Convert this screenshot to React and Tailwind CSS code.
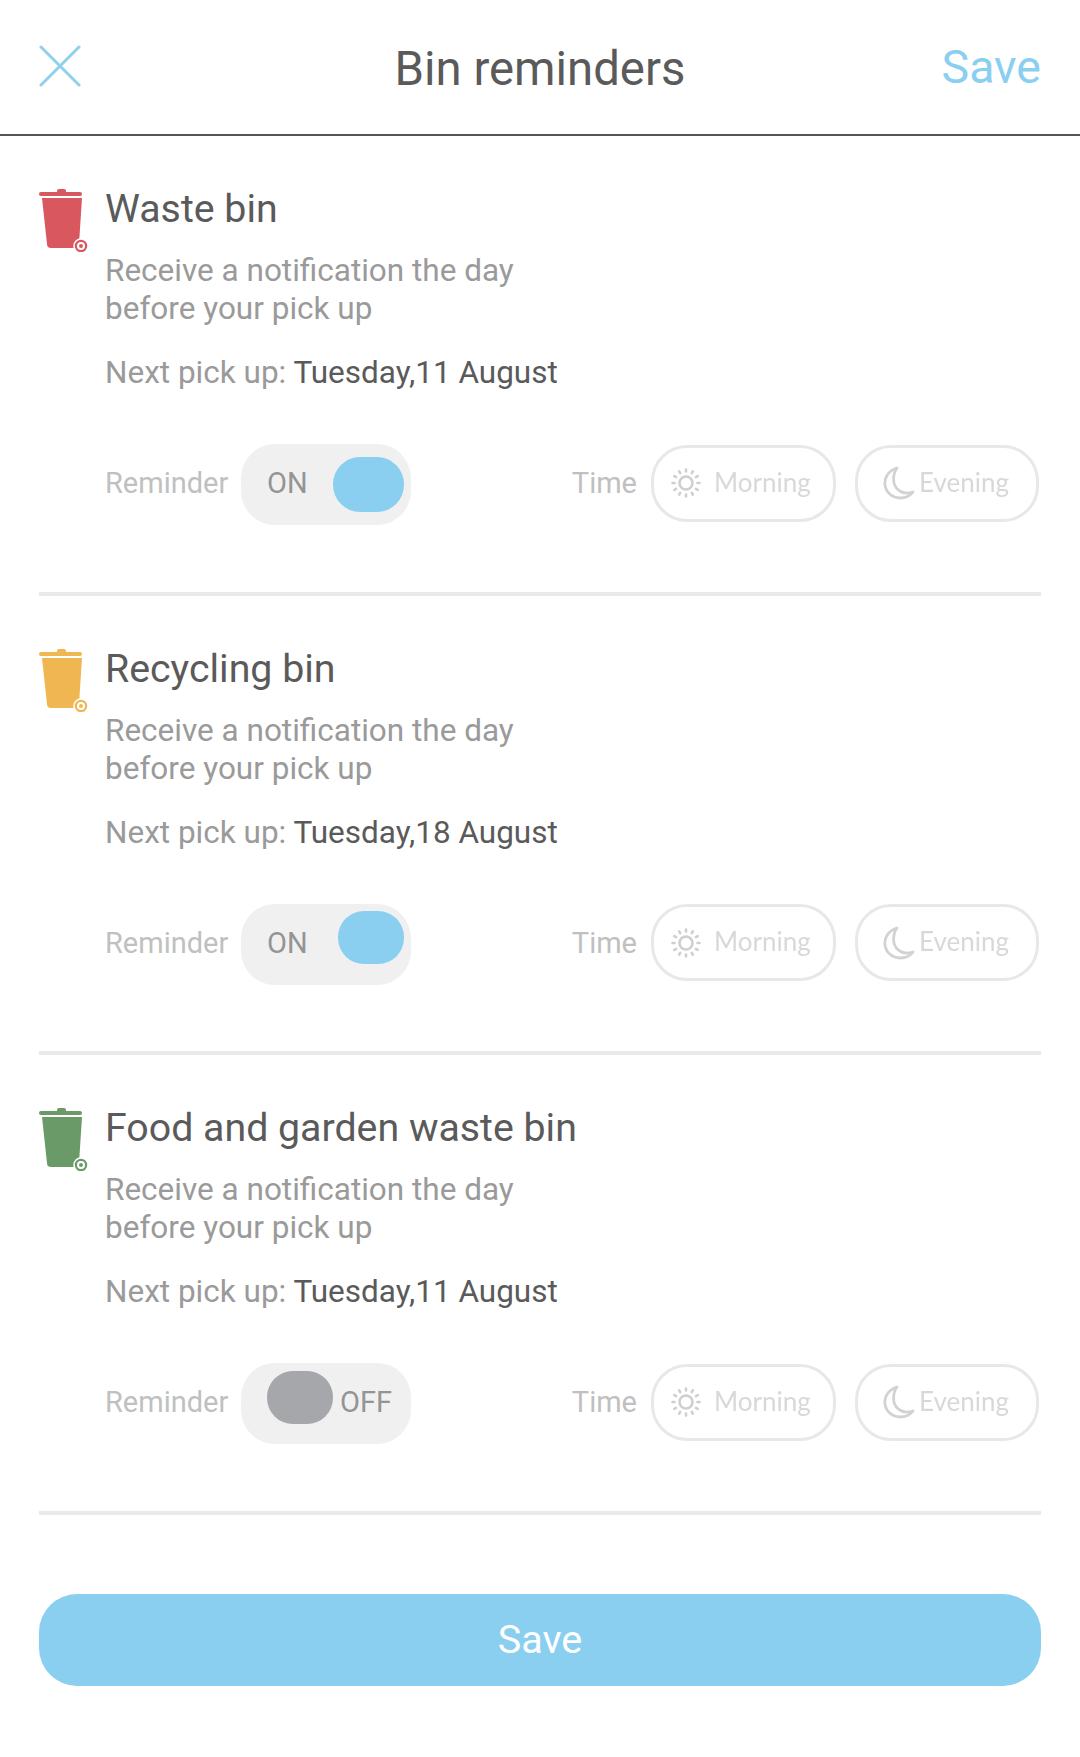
// Bin reminders settings screen
import React from 'react';

const bins = [
  { name: 'Waste bin', date: 'Tuesday,11 August', color: '#d9585f', state: 'on-large' },
  { name: 'Recycling bin', date: 'Tuesday,18 August', color: '#efb652', state: 'on' },
  { name: 'Food and garden waste bin', date: 'Tuesday,11 August', color: '#6a9a68', state: 'off' },
];

const BinIcon = ({ color }) => (
  <svg width="50" height="64" viewBox="0 0 50 64" className="mt-[6px] shrink-0">
    <rect x="18" y="1" width="9" height="5" rx="2" fill={color} />
    <rect x="0" y="4" width="43" height="4" rx="2" fill={color} />
    <path d="M3 10 H43 L40 56 Q40 60 36 60 H12 Q8 60 8 56 Z" fill={color} />
    <circle cx="42" cy="58" r="7" fill={color} stroke="#fff" strokeWidth="1.5" />
    <circle cx="42" cy="58" r="3" fill={color} stroke="#fff" strokeWidth="2" />
  </svg>
);

const SunIcon = () => (
  <svg width="32" height="32" viewBox="0 0 32 32" fill="none" stroke="#cfcfcf" strokeWidth="2.6" strokeLinecap="round" className="shrink-0">
    <circle cx="16" cy="16" r="6.5" />
    <path d="M16 2.5v2M16 27.5v2M2.5 16h2M27.5 16h2M9.2 4.3l1 1.8M21.8 25.9l1 1.8M4.3 9.2l1.8 1M25.9 21.8l1.8 1M4.3 22.8l1.8-1M25.9 10.2l1.8-1M9.2 27.7l1-1.8M21.8 6.1l1-1.8" />
  </svg>
);

const MoonIcon = () => (
  <svg width="32" height="34" viewBox="0 0 32 34" fill="none" stroke="#d2d2d2" strokeWidth="2.8" strokeLinejoin="round" className="shrink-0">
    <path d="M14 2 C5 5 1 12 2 19 C3 27 10 32 17 32 C23 32 28 29 30 26 C21 29 13 25 11 17 C10 11 11 6 14 2 Z" />
  </svg>
);

const Toggle = ({ state }) => {
  if (state === 'off') {
    return (
      <div className="mt-[3px] flex h-[81px] w-[170px] items-start rounded-[34px] bg-[#f0f0f1] pl-[26px] pt-2">
        <div className="h-[53px] w-[66px] rounded-[26px] bg-[#a6a7aa]" />
        <span className="ml-[7px] mt-[9px] text-[29px] leading-[44px] text-[#949494]">OFF</span>
      </div>
    );
  }
  return (
    <div className="mt-[3px] flex h-[81px] w-[170px] items-start justify-between rounded-[34px] bg-[#f0f0f1] pl-[26px] pr-[7px]">
      <span className="mt-[17px] text-[29px] leading-[44px] text-[#949494]">ON</span>
      {state === 'on-large' ? (
        <div className="mt-[13px] h-[55px] w-[71px] rounded-[27px] bg-[#8bcff0]" />
      ) : (
        <div className="mt-[7px] h-[53px] w-[66px] rounded-[26px] bg-[#8bcff0]" />
      )}
    </div>
  );
};

const TimePill = ({ icon, label, className }) => (
  <div className={`flex h-[77px] items-center rounded-[36px] border-[3px] border-[#e8e8e8] ${className}`}>
    {icon}
    <span className="pb-[3px] font-['Lato'] text-[26px] leading-none text-[#d8d8d8] blur-[0.4px]">{label}</span>
  </div>
);

const BinSection = ({ bin }) => (
  <section className="mx-[39px] h-[459.6px] border-b-[4px] border-[#e9e9e9] pt-[46px]">
    <div className="flex gap-4">
      <BinIcon color={bin.color} />
      <div className="flex-1">
        <h2 className="-mt-px text-[39.3px] leading-[56px] text-[#5a5a5a]">{bin.name}</h2>
        <p className="mt-[15px] text-[31.5px] leading-[38px] text-[#9a9a9a]">
          Receive a notification the day
          <br />
          before your pick up
        </p>
        <p className="mt-[26px] text-[31.5px] leading-[38px] text-[#9a9a9a]">
          Next pick up: <span className="text-[#5a5a5a]">{bin.date}</span>
        </p>
      </div>
    </div>
    <div className="mt-[49px] flex items-center pl-[66px]">
      <span className="w-[136px] pt-[2px] text-[29px] text-[#c0c0c0]">Reminder</span>
      <Toggle state={bin.state} />
      <span className="ml-auto mr-[14px] pt-[2px] text-[29px] text-[#c0c0c0]">Time</span>
      <TimePill icon={<SunIcon />} label="Morning" className="w-[185px] gap-[12px] pl-[16px]" />
      <TimePill icon={<MoonIcon />} label="Evening" className="ml-[19px] mr-[2px] w-[184px] gap-[4px] pl-[25px]" />
    </div>
  </section>
);

const App = () => (
  <div className="min-h-screen bg-white font-['Roboto',sans-serif]">
    <header className="grid h-[136px] grid-cols-[1fr_auto_1fr] items-center border-b-2 border-[#555555] px-[39px] pb-[2px]">
      <svg width="42" height="42" viewBox="0 0 42 42" fill="none" stroke="#8fd0ec" strokeWidth="3" strokeLinecap="round">
        <path d="M2 2 L40 40 M40 2 L2 40" />
      </svg>
      <h1 className="pt-[7px] text-[47.3px] leading-none text-[#5a5a5a]">Bin reminders</h1>
      <button className="justify-self-end pt-[2px] text-[46.5px] leading-none text-[#8bcff0]">Save</button>
    </header>
    {bins.map((bin) => (
      <BinSection key={bin.name} bin={bin} />
    ))}
    <div className="px-[39px] pt-[79px]">
      <button className="h-[92px] w-full rounded-[38px] bg-[#8bcff0] text-[39.5px] text-white">Save</button>
    </div>
  </div>
);

export default App;
